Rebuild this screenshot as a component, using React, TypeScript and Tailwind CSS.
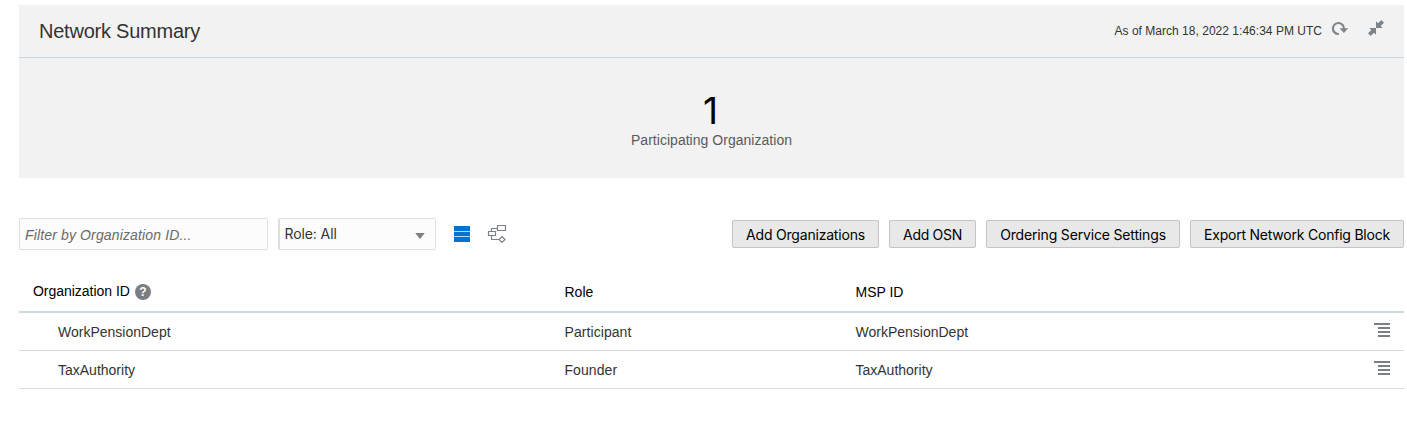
const actions = [
  { label: 'Add Organizations', width: 'w-[147px]', spacing: 'tracking-[-0.2px]' },
  { label: 'Add OSN', width: 'w-[87px]', spacing: 'tracking-[-0.3px]' },
  { label: 'Ordering Service Settings', width: 'w-[194px]', spacing: 'tracking-[-0.16px]' },
  { label: 'Export Network Config Block', width: 'w-[214px]', spacing: 'tracking-[-0.22px]' },
];

const organizations = [
  { id: 'WorkPensionDept', role: 'Participant', msp: 'WorkPensionDept' },
  { id: 'TaxAuthority', role: 'Founder', msp: 'TaxAuthority' },
];

function RefreshIcon() {
  return (
    <svg width="18" height="16" viewBox="0 0 18 16" className="block">
      <path d="M7.9 13H6.9A5.5 5.5 0 1 1 12.9 8" fill="none" stroke="#7f8488" strokeWidth="2.1" />
      <path d="M8.6 7.2H17.2L12.9 12Z" fill="#7f8488" />
    </svg>
  );
}

function CollapseIcon() {
  return (
    <svg width="16" height="16" viewBox="0 0 16 16" className="block" fill="#7f8488">
      <path d="M8 1.2V8H14.8L12.7 5.9L16 2.8L13.2 0L10.1 3.3Z" />
      <path d="M8 14.8V8H1.2L3.3 10.1L0 13.2L2.8 16L5.9 12.7Z" />
    </svg>
  );
}

function ListIcon() {
  return (
    <svg width="16" height="16" viewBox="0 0 16 16" className="block" shapeRendering="crispEdges">
      <path d="M0 0H16V16H0Z" fill="#b5d7f1" />
      <path d="M0 0H16V5H0ZM0 6H16V10H0ZM0 11H16V16H0Z" fill="#0572ce" />
    </svg>
  );
}

function TopologyIcon() {
  return (
    <svg width="20" height="18" viewBox="0 0 20 18" className="block" fill="none" stroke="#7c8186" strokeWidth="1.2">
      <path d="M10.5 0.5H18.5V5.5H10.5ZM1.5 6.5H8.5V10.5H1.5Z" />
      <path d="M4.5 6.5V3.5H10.5M4.5 10.5V14.5H12" />
      <path d="M15 11.5L18 14.5L15 17.4L12 14.5Z" />
    </svg>
  );
}

function RowMenuIcon() {
  return (
    <svg width="16" height="14" viewBox="0 0 16 14" className="block" shapeRendering="crispEdges">
      <path d="M0 0H16V2H0ZM4 4H16V6H4ZM4 8H16V10H4ZM4 12H16V14H4Z" fill="#7c7f84" />
    </svg>
  );
}

export default function App() {
  return (
    <main className="h-[446px] w-[1407px] bg-white pt-[5px] pr-[3px] pl-[19px] font-['Liberation_Sans',Arial,sans-serif] text-sm text-[#333333]">
      <section className="h-[173px] bg-[#f2f2f2]">
        <header className="flex h-[53px] items-center border-b border-[#cbd6df] pl-5">
          <h1 className="grow text-xl tracking-[-0.23px] text-[#333333]">Network Summary</h1>
          <span className="text-xs tracking-[0.02px] text-[#333333]">As of March 18, 2022 1:46:34 PM UTC</span>
          <button aria-label="Refresh" className="mb-[5px] ml-[9px]">
            <RefreshIcon />
          </button>
          <button aria-label="Collapse" className="mr-5 mb-[7px] ml-[19px]">
            <CollapseIcon />
          </button>
        </header>
        <div className="flex flex-col items-center pt-[33px]">
          <span className="pr-0.5 font-['Inter',sans-serif] text-[37px] leading-10 font-normal text-black">1</span>
          <span className="leading-[18px] tracking-[0.03px] text-[#5a5a5a]">Participating Organization</span>
        </div>
      </section>

      <section className="mt-10 flex h-8 items-center font-['Inter',sans-serif]">
        <input
          placeholder="Filter by Organization ID..."
          aria-label="Filter"
          className="h-8 w-[249px] rounded-[2px] border border-[#dfdfdf] bg-[#fcfcfc] px-[5px] pt-0.5 font-['Liberation_Sans',Arial,sans-serif] text-sm tracking-[0.14px] italic placeholder:text-[#6a6a6a]"
        />
        <button className="ml-2.5 flex h-8 w-[158px] items-center justify-between rounded-[2px] border border-l-2 border-[#dfdfdf] bg-[#fcfcfc] pr-[10px] pl-[4.5px]">
          <span className="tracking-[-0.1px] text-[#333333]">Role: All</span>
          <svg width="10" height="6" viewBox="0 0 10 6" className="mt-[3px]">
            <path d="M0.2 0H9.8L5 6Z" fill="#7c7f84" />
          </svg>
        </button>
        <button aria-label="List view" className="ml-[18px]">
          <ListIcon />
        </button>
        <button aria-label="Topology view" className="ml-[17px]">
          <TopologyIcon />
        </button>
        <div className="ml-auto flex gap-2.5">
          {actions.map((a) => (
            <button
              key={a.label}
              className={`${a.width} ${a.spacing} h-7 rounded-[2px] border border-[#c4c4c4] bg-[#e8e8e8] pt-0.5 text-center text-sm whitespace-nowrap text-black`}
            >
              {a.label}
            </button>
          ))}
        </div>
      </section>

      <section className="mt-[21px]">
        <div className="grid h-[42px] grid-cols-[545.5px_291px_1fr] items-center border-b-2 border-[#cdd8e1] text-black">
          <div className="mb-px flex items-center gap-[5px] pl-3.5">
            <span className="tracking-[-0.03px]">Organization ID</span>
            <span className="mt-[3px] flex size-4 items-center justify-center rounded-full bg-[#7c7f82] text-xs font-bold text-white">
              ?
            </span>
          </div>
          <div className="mt-px">Role</div>
          <div className="mt-px">MSP ID</div>
        </div>
        {organizations.map((o) => (
          <div
            key={o.id}
            className="grid h-[38px] grid-cols-[545.5px_291px_1fr_30px] items-center border-b border-[#d9dadb]"
          >
            <div className="pl-[39px]">{o.id}</div>
            <div className="tracking-[0.07px]">{o.role}</div>
            <div>{o.msp}</div>
            <button aria-label="Row actions" className="mb-[3px]">
              <RowMenuIcon />
            </button>
          </div>
        ))}
      </section>
    </main>
  );
}
